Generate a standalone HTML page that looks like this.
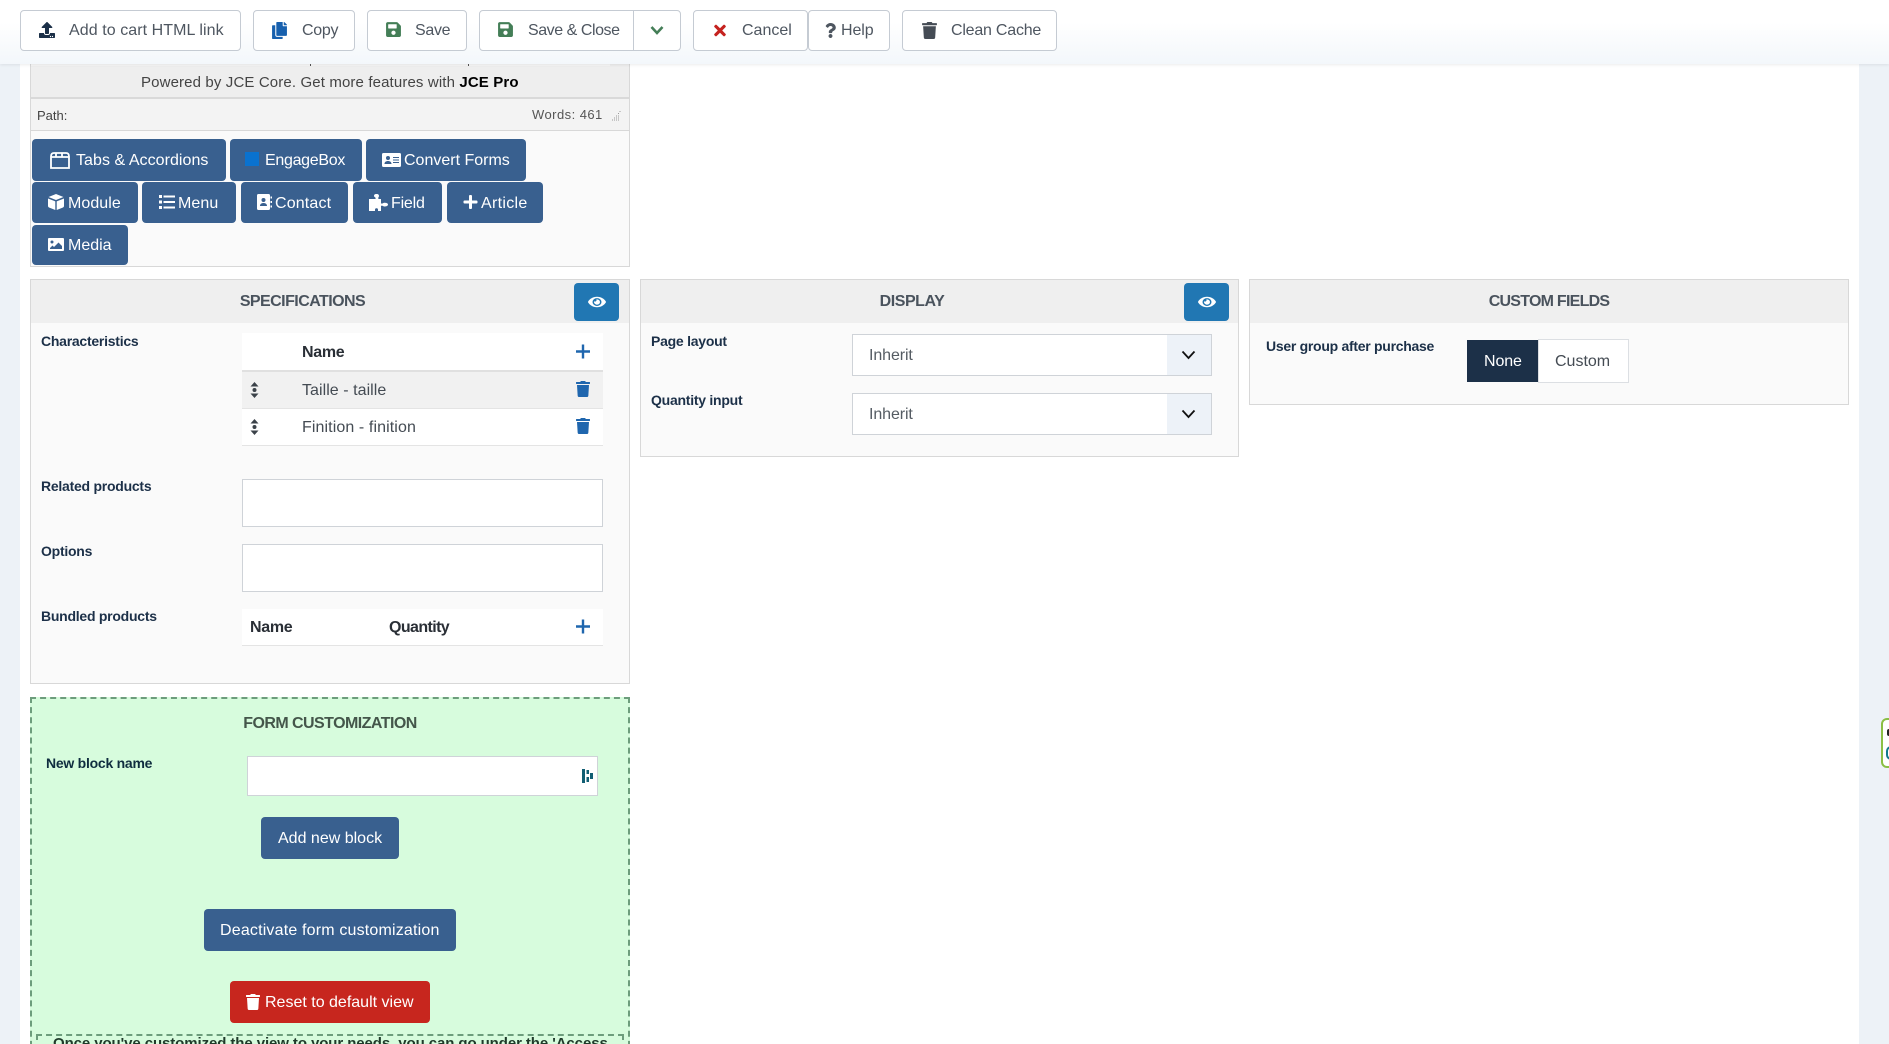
<!DOCTYPE html>
<html><head><meta charset="utf-8"><title>Product</title>
<style>
*{box-sizing:border-box}
html,body{margin:0;padding:0;width:1889px;height:1044px;overflow:hidden;background:#fff;font-family:"Liberation Sans",Arial,sans-serif}
body{position:relative}
.a{position:absolute}
.t{position:absolute;white-space:nowrap;height:20px;line-height:20px;font-size:16px}
.tb{position:absolute;top:10px;height:41px;background:#fff;border:1px solid #c5cbd3;border-radius:4px}
.tt{color:#4e5660}
.panel{position:absolute;background:#fafafa;border:1px solid #d8d8d8}
.head{position:absolute;background:#efefef;left:31px;height:43px}
.h{position:absolute;white-space:nowrap;height:20px;line-height:20px;font-size:16px;font-weight:bold;color:#4a535d;text-align:center;letter-spacing:-.55px}
.l{position:absolute;white-space:nowrap;height:20px;line-height:20px;font-size:14px;font-weight:bold;color:#1c3048;letter-spacing:-.25px}
.b{position:absolute;background:#39608f;border-radius:4px;color:#fff;font-size:16px;white-space:nowrap}
.b span{position:absolute;top:50%;margin-top:-9px;line-height:20px}
.b svg{position:absolute;fill:#fff}
.inp{position:absolute;background:#fff;border:1px solid #cfd3d8}
.eye{position:absolute;top:283px;width:45px;height:38px;background:#2177b3;border-radius:4px}
.eye svg{position:absolute;left:14px;top:12px;fill:#fff}
.ln{position:absolute;background:#e4e4e4;height:1px}
svg{display:block}
</style></head><body>
<div class="a" style="left:0;top:0;width:20px;height:1044px;background:#edf2f7"></div>
<div class="a" style="left:1859px;top:0;width:30px;height:1044px;background:#edf2f7"></div>

<!-- editor panel -->
<div class="panel" style="left:30px;top:50px;width:600px;height:217px"></div>
<div class="a" style="left:31px;top:64px;width:598px;height:33px;background:#eee"></div>
<div class="a" style="left:31px;top:64px;width:579px;height:2px;background:#f6f6f6"></div>
<div class="a" style="left:310px;top:64px;width:1px;height:2px;background:#555"></div>
<div class="a" style="left:468px;top:64px;width:1px;height:2px;background:#555"></div>
<div class="t" style="left:141px;top:73px;font-size:15px;color:#444;letter-spacing:.13px">Powered by JCE Core. Get more features with <b style="color:#000">JCE Pro</b></div>
<div class="a" style="left:31px;top:97px;width:598px;height:2px;background:#d9d9d9"></div>
<div class="a" style="left:31px;top:99px;width:598px;height:32px;background:#f3f3f3;border-bottom:1px solid #d8d8d8"></div>
<div class="t" style="left:37px;top:106px;font-size:13px;color:#444">Path:</div>
<div class="t" style="left:532px;top:105px;font-size:13px;color:#555;letter-spacing:.45px">Words: 461</div>
<svg class="a" style="left:610px;top:110px" width="11" height="11" viewBox="0 0 11 11"><path d="M10 1v1M8 3.500h2M6 6h4M4 8h6M2 10h8" stroke="#999" stroke-width="1" stroke-dasharray="1 1" fill="none"/></svg>

<div class="b" style="left:32px;top:139px;width:194px;height:42px"><svg style="left:18px;top:13px" width="20" height="17" viewBox="0 0 20 17"><path d="M1 4.500 Q1 1 4 1H16Q19 1 19 4.500V16H1Z M1 5H19 M6 1V5 M12 1V5" fill="none" stroke="#fff" stroke-width="1.800"/></svg><span style="left:44px;letter-spacing:.05px">Tabs &amp; Accordions</span></div>
<div class="b" style="left:230px;top:139px;width:132px;height:42px"><svg style="left:15px;top:13px;fill:#0a72cf" width="14" height="14" viewBox="0 0 14 14"><rect width="14" height="14" fill="#0a72cf"/></svg><span style="left:35px;letter-spacing:-.3px">EngageBox</span></div>
<div class="b" style="left:366px;top:139px;width:160px;height:42px"><svg style="left:16px;top:14px" width="19" height="14" viewBox="0 0 19 14"><path fill-rule="evenodd" d="M1.500 0h16A1.500 1.500 0 0 1 19 1.500v11a1.500 1.500 0 0 1-1.500 1.500h-16A1.500 1.500 0 0 1 0 12.500v-11A1.500 1.500 0 0 1 1.500 0zM6 3a2 2 0 1 0 0 4 2 2 0 0 0 0-4zM2.500 11h7c0-2-1.500-3-3.500-3s-3.500 1-3.500 3zM11 4v1h6V4zM11 6.500v1h6v-1zM11 9v1h6V9z"/></svg><span style="left:38px">Convert Forms</span></div>

<div class="b" style="left:32px;top:182px;width:106px;height:41px"><svg style="left:16px;top:12px" width="16" height="16" viewBox="0 0 16 16"><path d="M8 0 15.500 3 8 6 .5 3zM0 4.500 7.300 7.400V16L1 13.500Q0 13 0 12zM16 4.500 8.700 7.400V16L15 13.500Q16 13 16 12z"/></svg><span style="left:36px;letter-spacing:.05px">Module</span></div>
<div class="b" style="left:142px;top:182px;width:94px;height:41px"><svg style="left:17px;top:13px" width="16" height="14" viewBox="0 0 16 14"><path d="M0 0h3v3H0zM4.500 .5H16v2H4.500zM0 5.500h3v3H0zM4.500 6H16v2H4.500zM0 11h3v3H0zM4.500 11.500H16v2H4.500z"/></svg><span style="left:36px;letter-spacing:.1px">Menu</span></div>
<div class="b" style="left:241px;top:182px;width:107px;height:41px"><svg style="left:16px;top:12px" width="15" height="16" viewBox="0 0 15 16"><path fill-rule="evenodd" d="M1.500 0h10A1.500 1.500 0 0 1 13 1.500v13a1.500 1.500 0 0 1-1.500 1.500h-10A1.500 1.500 0 0 1 0 14.500v-13A1.500 1.500 0 0 1 1.500 0zM6.500 4a2 2 0 1 0 0 4 2 2 0 0 0 0-4zM3 12h7c0-2-1.500-3-3.500-3S3 10 3 12zM13.500 2.500H15v2h-1.500zM13.500 7H15v2h-1.500zM13.500 11.500H15v2h-1.500z"/></svg><span style="left:34px;letter-spacing:.15px">Contact</span></div>
<div class="b" style="left:353px;top:182px;width:89px;height:41px"><svg style="left:16px;top:12px" width="19" height="17" viewBox="0 0 19 17"><path d="M7.500 0C9.500 0 10 1 10 2c0 1-.8 1.300-.8 2.200 0 .5.500.8 1.300.8H12v4.500h1.500c.5 0 .6-.8 1.900-.8C17 8.700 19 9 19 10.500S17 12.500 15.400 12.500c-1 0-1.400-.7-1.900-.7H12V17H9v-1.500c0-1-1-1.200-1.500-1.200S6 14.500 6 15.500V17H0V5h5.500c.8 0 1.200-.3 1.200-.8C6.700 3.300 5 3 5 2c0-1 .5-2 2.500-2z"/></svg><span style="left:38px;letter-spacing:-.2px">Field</span></div>
<div class="b" style="left:447px;top:182px;width:96px;height:41px"><svg style="left:16px;top:12px" width="15" height="16" viewBox="0 0 448 512"><path d="M416 208H272V64c0-17.670-14.330-32-32-32h-32c-17.670 0-32 14.330-32 32v144H32c-17.670 0-32 14.330-32 32v32c0 17.670 14.330 32 32 32h144v144c0 17.670 14.330 32 32 32h32c17.670 0 32-14.330 32-32V304h144c17.670 0 32-14.330 32-32v-32c0-17.670-14.330-32-32-32z"/></svg><span style="left:34px;letter-spacing:.3px">Article</span></div>

<div class="b" style="left:32px;top:225px;width:96px;height:40px"><svg style="left:16px;top:13px" width="16" height="13" viewBox="0 0 16 13"><path fill-rule="evenodd" d="M1 0h14a1 1 0 0 1 1 1v11a1 1 0 0 1-1 1H1a1 1 0 0 1-1-1V1a1 1 0 0 1 1-1zM4 2.500a1.500 1.500 0 1 0 0 3 1.500 1.500 0 0 0 0-3zM2 11h12V8L10.500 4.500 6 9 4.500 7.500 2 10z"/></svg><span style="left:36px">Media</span></div>

<!-- specifications -->
<div class="panel" style="left:30px;top:279px;width:600px;height:405px"></div>
<div class="head" style="top:280px;width:598px"></div>
<div class="h" style="left:30px;top:292px;width:545px">SPECIFICATIONS</div>
<div class="eye" style="left:574px"><svg width="18" height="14" viewBox="0 0 576 512" preserveAspectRatio="none"><path d="M572.520 241.400C518.290 135.590 410.930 64 288 64S57.680 135.640 3.480 241.410a32.350 32.350 0 0 0 0 29.190C57.710 376.410 165.070 448 288 448s230.320-71.640 284.520-177.410a32.350 32.350 0 0 0 0-29.190zM288 400a144 144 0 1 1 144-144 143.930 143.930 0 0 1-144 144zm0-240a95.310 95.310 0 0 0-25.310 3.790 47.850 47.850 0 0 1-66.900 66.900A95.780 95.780 0 1 0 288 160z"/></svg></div>
<div class="l" style="left:41px;top:331px">Characteristics</div>

<div class="a" style="left:242px;top:333px;width:361px;height:37px;background:#fff"></div>
<div class="a" style="left:242px;top:370px;width:361px;height:2px;background:#e0e0e0"></div>
<div class="a" style="left:242px;top:372px;width:361px;height:36px;background:#f1f1f1"></div>
<div class="a" style="left:242px;top:408px;width:361px;height:37px;background:#fff"></div>
<div class="ln" style="left:242px;top:408px;width:361px"></div>
<div class="ln" style="left:242px;top:445px;width:361px"></div>
<div class="t" style="left:302px;top:343px;font-weight:bold;color:#2a2f36;letter-spacing:-.3px">Name</div>
<div class="t" style="left:302px;top:381px;color:#444b53;letter-spacing:.05px">Taille - taille</div>
<div class="t" style="left:302px;top:418px;color:#444b53;letter-spacing:.1px">Finition - finition</div>
<svg class="a" style="left:576px;top:344px" width="14" height="15" viewBox="0 0 14 14"><path d="M7 0v14M0 7h14" stroke="#1f66ae" stroke-width="2.400" fill="none"/></svg>
<svg class="a" style="left:576px;top:381px;fill:#1f66ae" width="14" height="16" viewBox="0 0 448 512"><path d="M432 32H312l-9.400-18.700A24 24 0 0 0 281.100 0H166.800a23.720 23.720 0 0 0-21.400 13.300L136 32H16A16 16 0 0 0 0 48v32a16 16 0 0 0 16 16h416a16 16 0 0 0 16-16V48a16 16 0 0 0-16-16zM53.200 467a48 48 0 0 0 47.900 45h245.800a48 48 0 0 0 47.900-45L416 128H32z"/></svg>
<svg class="a" style="left:576px;top:418px;fill:#1f66ae" width="14" height="16" viewBox="0 0 448 512"><path d="M432 32H312l-9.400-18.700A24 24 0 0 0 281.100 0H166.800a23.720 23.720 0 0 0-21.400 13.300L136 32H16A16 16 0 0 0 0 48v32a16 16 0 0 0 16 16h416a16 16 0 0 0 16-16V48a16 16 0 0 0-16-16zM53.200 467a48 48 0 0 0 47.900 45h245.800a48 48 0 0 0 47.900-45L416 128H32z"/></svg>
<svg class="a" style="left:250px;top:382px" width="9" height="16" viewBox="0 0 9 16"><path d="M4.500 0 8.500 4.500H.5zM4.500 16 .5 11.500h8zM4.500 6a2 2 0 1 0 0 4 2 2 0 0 0 0-4z" fill="#3b4249"/></svg>
<svg class="a" style="left:250px;top:419px" width="9" height="16" viewBox="0 0 9 16"><path d="M4.500 0 8.500 4.500H.5zM4.500 16 .5 11.500h8zM4.500 6a2 2 0 1 0 0 4 2 2 0 0 0 0-4z" fill="#3b4249"/></svg>

<div class="l" style="left:41px;top:476px">Related products</div>
<div class="inp" style="left:242px;top:479px;width:361px;height:48px"></div>
<div class="l" style="left:41px;top:541px">Options</div>
<div class="inp" style="left:242px;top:544px;width:361px;height:48px"></div>
<div class="l" style="left:41px;top:606px">Bundled products</div>
<div class="a" style="left:242px;top:609px;width:361px;height:37px;background:#fff;border-bottom:1px solid #e4e4e4"></div>
<div class="t" style="left:250px;top:618px;font-weight:bold;color:#2a2f36;letter-spacing:-.3px">Name</div>
<div class="t" style="left:389px;top:618px;font-weight:bold;color:#2a2f36;letter-spacing:-.6px">Quantity</div>
<svg class="a" style="left:576px;top:619px" width="14" height="15" viewBox="0 0 14 14"><path d="M7 0v14M0 7h14" stroke="#1f66ae" stroke-width="2.400" fill="none"/></svg>

<!-- display -->
<div class="panel" style="left:640px;top:279px;width:599px;height:178px"></div>
<div class="head" style="left:641px;top:280px;width:597px"></div>
<div class="h" style="left:640px;top:292px;width:544px;letter-spacing:-.45px">DISPLAY</div>
<div class="eye" style="left:1184px"><svg width="18" height="14" viewBox="0 0 576 512" preserveAspectRatio="none"><path d="M572.520 241.400C518.290 135.590 410.930 64 288 64S57.680 135.640 3.480 241.410a32.350 32.350 0 0 0 0 29.190C57.710 376.410 165.070 448 288 448s230.320-71.640 284.520-177.410a32.350 32.350 0 0 0 0-29.190zM288 400a144 144 0 1 1 144-144 143.930 143.930 0 0 1-144 144zm0-240a95.310 95.310 0 0 0-25.310 3.790 47.850 47.850 0 0 1-66.900 66.900A95.780 95.780 0 1 0 288 160z"/></svg></div>
<div class="l" style="left:651px;top:331px">Page layout</div>
<div class="inp" style="left:852px;top:334px;width:360px;height:42px"></div>
<div class="a" style="left:1167px;top:335px;width:44px;height:40px;background:#edf2f8"></div>
<div class="t" style="left:869px;top:346px;color:#555c63;letter-spacing:-.1px">Inherit</div>
<svg class="a" style="left:1181px;top:350px" width="15" height="10" viewBox="0 0 15 10"><path d="M1.500 1.500 7.500 8 13.500 1.500" fill="none" stroke="#111" stroke-width="1.800"/></svg>
<div class="l" style="left:651px;top:390px">Quantity input</div>
<div class="inp" style="left:852px;top:393px;width:360px;height:42px"></div>
<div class="a" style="left:1167px;top:394px;width:44px;height:40px;background:#edf2f8"></div>
<div class="t" style="left:869px;top:405px;color:#555c63;letter-spacing:-.1px">Inherit</div>
<svg class="a" style="left:1181px;top:409px" width="15" height="10" viewBox="0 0 15 10"><path d="M1.500 1.500 7.500 8 13.500 1.500" fill="none" stroke="#111" stroke-width="1.800"/></svg>

<!-- custom fields -->
<div class="panel" style="left:1249px;top:279px;width:600px;height:126px"></div>
<div class="head" style="left:1250px;top:280px;width:598px"></div>
<div class="h" style="left:1249px;top:292px;width:600px;letter-spacing:-.75px">CUSTOM FIELDS</div>
<div class="l" style="left:1266px;top:336px;letter-spacing:-.28px">User group after purchase</div>
<div class="a" style="left:1538px;top:339px;width:91px;height:44px;background:#fff;border:1px solid #dcdfe3"></div>
<div class="a" style="left:1467px;top:340px;width:71px;height:42px;background:#1c3048"></div>
<div class="t" style="left:1484px;top:352px;color:#fff;letter-spacing:-.1px">None</div>
<div class="t" style="left:1555px;top:352px;color:#444b53;letter-spacing:0">Custom</div>

<!-- form customization -->
<div class="a" style="left:30px;top:697px;width:600px;height:360px;background:#d7fcdd;border:2px dashed #6d9d7c"></div>
<div class="h" style="left:30px;top:714px;width:600px;color:#44564a;letter-spacing:-.55px">FORM CUSTOMIZATION</div>
<div class="l" style="left:46px;top:753px;color:#0f2d3f">New block name</div>
<div class="inp" style="left:247px;top:756px;width:351px;height:40px"></div>
<svg class="a" style="left:582px;top:769px" width="11" height="14" viewBox="0 0 11 14"><path d="M0 0h3v14H0zM4.500 1H7v4H4.500zM4.500 8H7v5H4.500zM8 4h3v6H8z" fill="#115e73"/></svg>
<div class="b" style="left:261px;top:817px;width:138px;height:42px"><span style="left:17px">Add new block</span></div>
<div class="b" style="left:204px;top:909px;width:252px;height:42px"><span style="left:16px;letter-spacing:.18px">Deactivate form customization</span></div>
<div class="b" style="left:230px;top:981px;width:200px;height:42px;background:#c7261e"><svg style="left:16px;top:13px" width="14" height="16" viewBox="0 0 448 512"><path d="M432 32H312l-9.400-18.700A24 24 0 0 0 281.100 0H166.800a23.720 23.720 0 0 0-21.400 13.300L136 32H16A16 16 0 0 0 0 48v32a16 16 0 0 0 16 16h416a16 16 0 0 0 16-16V48a16 16 0 0 0-16-16zM53.200 467a48 48 0 0 0 47.900 45h245.800a48 48 0 0 0 47.900-45L416 128H32z"/></svg><span style="left:35px">Reset to default view</span></div>
<div class="a" style="left:36px;top:1034px;width:588px;height:40px;border:2px dashed #6d9d7c"></div>
<div class="t" style="left:53px;top:1034px;font-weight:bold;font-size:15px;color:#1f3a2a;letter-spacing:-.09px">Once you've customized the view to your needs, you can go under the 'Access</div>

<!-- right widget -->
<div class="a" style="left:1881px;top:718px;width:30px;height:50px;border:2px solid #8bbf45;border-radius:6px;background:#fff"></div>
<div class="a" style="left:1887px;top:729px;width:4px;height:7px;background:#222;border-radius:3px"></div>
<div class="a" style="left:1886px;top:746px;width:6px;height:14px;border:2px solid #117a8b;border-right:0;border-radius:5px 0 0 5px"></div>

<!-- toolbar -->
<div class="a" style="left:0;top:0;width:1889px;height:64px;background:linear-gradient(#fff,#fff 35%,#f3f7fb);box-shadow:0 1px 3px rgba(0,0,0,.08)"></div>
<div class="tb" style="left:20px;width:221px"></div>
<svg class="a" style="left:39px;top:22px;fill:#1c3048" width="16" height="16" viewBox="0 0 512 512"><path d="M296 384h-80c-13.300 0-24-10.700-24-24V192h-87.700c-17.800 0-26.700-21.500-14.100-34.100L242.300 5.700c7.500-7.500 19.800-7.500 27.300 0l152.200 152.200c12.600 12.600 3.700 34.100-14.100 34.100H320v168c0 13.300-10.700 24-24 24zm216-8v112c0 13.300-10.700 24-24 24H24c-13.300 0-24-10.700-24-24V376c0-13.300 10.700-24 24-24h136v8c0 30.900 25.100 56 56 56h80c30.900 0 56-25.100 56-56v-8h136c13.300 0 24 10.700 24 24zm-124 88c0-11-9-20-20-20s-20 9-20 20 9 20 20 20 20-9 20-20zm64 0c0-11-9-20-20-20s-20 9-20 20 9 20 20 20 20-9 20-20z"/></svg>
<div class="t tt" style="left:69px;top:21px;letter-spacing:.07px">Add to cart HTML link</div>
<div class="tb" style="left:253px;width:102px"></div>
<svg class="a" style="left:272px;top:22px;fill:#1760ae" width="15" height="17" viewBox="0 0 448 512"><path d="M320 448v40c0 13.255-10.745 24-24 24H24c-13.255 0-24-10.745-24-24V120c0-13.255 10.745-24 24-24h72v296c0 30.879 25.121 56 56 56h168zm0-344V0H152c-13.255 0-24 10.745-24 24v368c0 13.255 10.745 24 24 24h272c13.255 0 24-10.745 24-24V128H344c-13.200 0-24-10.800-24-24zm120.971-31.029L375.029 7.029A24 24 0 0 0 358.059 0H352v96h96v-6.059a24 24 0 0 0-7.029-16.970z"/></svg>
<div class="t tt" style="left:302px;top:21px;letter-spacing:-.3px">Copy</div>
<div class="tb" style="left:367px;width:100px"></div>
<svg class="a" style="left:386px;top:21px;fill:#447e57" width="15" height="17" viewBox="0 0 448 512"><path d="M433.941 129.941l-83.882-83.882A48 48 0 0 0 316.118 32H48C21.490 32 0 53.490 0 80v352c0 26.510 21.490 48 48 48h352c26.510 0 48-21.490 48-48V163.882a48 48 0 0 0-14.059-33.941zM224 416c-35.346 0-64-28.654-64-64 0-35.346 28.654-64 64-64s64 28.654 64 64c0 35.346-28.654 64-64 64zm96-304.520V212c0 6.627-5.373 12-12 12H76c-6.627 0-12-5.373-12-12V108c0-6.627 5.373-12 12-12h228.520c3.183 0 6.235 1.264 8.485 3.515l3.480 3.480A11.996 11.996 0 0 1 320 111.480z"/></svg>
<div class="t tt" style="left:415px;top:21px;letter-spacing:-.3px">Save</div>
<div class="tb" style="left:479px;width:202px"></div>
<div class="a" style="left:633px;top:11px;width:1px;height:39px;background:#c5cbd3"></div>
<svg class="a" style="left:498px;top:21px;fill:#447e57" width="15" height="17" viewBox="0 0 448 512"><path d="M433.941 129.941l-83.882-83.882A48 48 0 0 0 316.118 32H48C21.490 32 0 53.490 0 80v352c0 26.510 21.490 48 48 48h352c26.510 0 48-21.490 48-48V163.882a48 48 0 0 0-14.059-33.941zM224 416c-35.346 0-64-28.654-64-64 0-35.346 28.654-64 64-64s64 28.654 64 64c0 35.346-28.654 64-64 64zm96-304.520V212c0 6.627-5.373 12-12 12H76c-6.627 0-12-5.373-12-12V108c0-6.627 5.373-12 12-12h228.520c3.183 0 6.235 1.264 8.485 3.515l3.480 3.480A11.996 11.996 0 0 1 320 111.480z"/></svg>
<div class="t tt" style="left:528px;top:21px;letter-spacing:-.45px">Save &amp; Close</div>
<svg class="a" style="left:650px;top:25px" width="14" height="11" viewBox="0 0 14 11"><path d="M1.500 2 7 8 12.500 2" fill="none" stroke="#447e57" stroke-width="2.600"/></svg>
<div class="tb" style="left:693px;width:115px"></div>
<svg class="a" style="left:714px;top:22px;fill:#c5221f" width="12" height="17" viewBox="0 0 352 512"><path d="M242.720 256l100.070-100.070c12.280-12.280 12.280-32.190 0-44.480l-22.240-22.240c-12.280-12.280-32.190-12.280-44.480 0L176 189.280 75.930 89.210c-12.280-12.280-32.190-12.280-44.480 0L9.210 111.450c-12.280 12.280-12.280 32.190 0 44.480L109.280 256 9.210 356.070c-12.280 12.280-12.280 32.190 0 44.480l22.240 22.240c12.280 12.280 32.200 12.280 44.480 0L176 322.720l100.070 100.070c12.280 12.280 32.200 12.280 44.480 0l22.240-22.240c12.280-12.280 12.280-32.190 0-44.480L242.720 256z"/></svg>
<div class="t tt" style="left:742px;top:21px">Cancel</div>
<div class="tb" style="left:808px;width:82px"></div>
<svg class="a" style="left:825px;top:23px;fill:#4e5660" width="11" height="15" viewBox="0 0 384 512" preserveAspectRatio="none"><path d="M202.021 0C122.202 0 70.503 32.703 29.914 91.026c-7.363 10.580-5.093 25.086 5.178 32.874l43.138 32.709c10.373 7.865 25.132 6.026 33.253-4.148 25.049-31.381 43.630-49.449 82.757-49.449 30.764 0 68.816 19.799 68.816 49.631 0 22.552-18.617 34.134-48.993 51.164-35.423 19.860-82.299 44.576-82.299 106.405V320c0 13.255 10.745 24 24 24h72.471c13.255 0 24-10.745 24-24v-5.773c0-42.860 125.268-44.645 125.268-160.627C377.504 66.256 286.902 0 202.021 0zM192 373.459c-38.196 0-69.271 31.075-69.271 69.271 0 38.195 31.075 69.270 69.271 69.270s69.271-31.075 69.271-69.271-31.075-69.270-69.271-69.270z"/></svg>
<div class="t tt" style="left:841px;top:21px;letter-spacing:-.1px">Help</div>
<div class="tb" style="left:902px;width:155px"></div>
<svg class="a" style="left:922px;top:22px;fill:#454c55" width="15" height="17" viewBox="0 0 448 512"><path d="M432 32H312l-9.400-18.700A24 24 0 0 0 281.100 0H166.800a23.720 23.720 0 0 0-21.400 13.300L136 32H16A16 16 0 0 0 0 48v32a16 16 0 0 0 16 16h416a16 16 0 0 0 16-16V48a16 16 0 0 0-16-16zM53.200 467a48 48 0 0 0 47.900 45h245.800a48 48 0 0 0 47.900-45L416 128H32z"/></svg>
<div class="t tt" style="left:951px;top:21px;letter-spacing:-.22px">Clean Cache</div>
</body></html>
